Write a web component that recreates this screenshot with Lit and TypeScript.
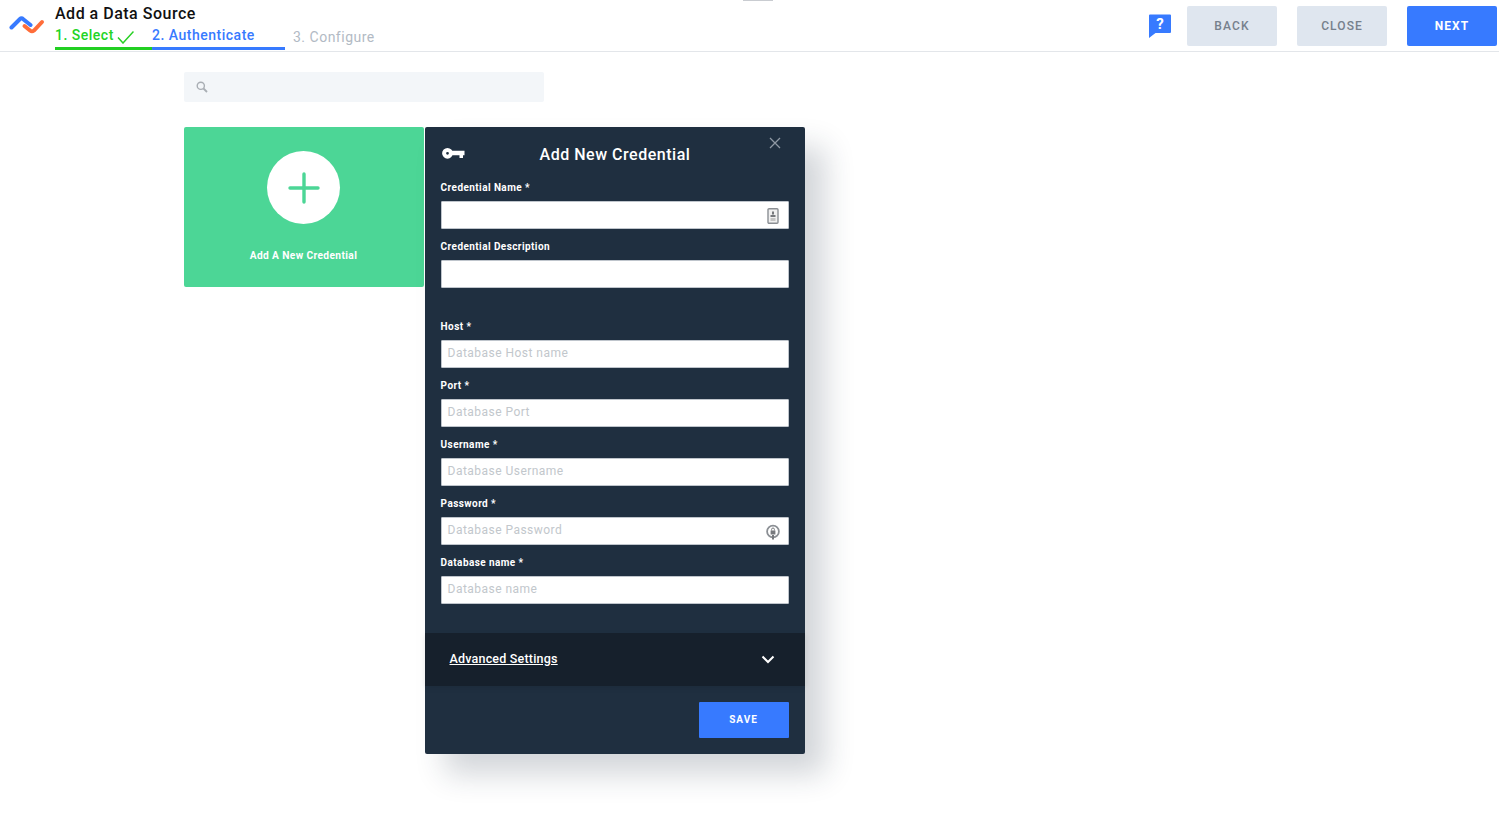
import { LitElement, html, css, svg } from "lit";
import { customElement } from "lit/decorators.js";

const fields = [
  { label: "Host *", ph: "Database Host name" },
  { label: "Port *", ph: "Database Port" },
  { label: "Username *", ph: "Database Username" },
  { label: "Password *", ph: "Database Password", icon: "lock" },
  { label: "Database name *", ph: "Database name" },
];

@customElement("app-root")
export class AppRoot extends LitElement {
  static styles = css`
    :host { display: block; height: 817px; position: relative; overflow: hidden; background: #fff; font-family: Roboto, "Liberation Sans", sans-serif; }
    * { box-sizing: border-box; }
    .handle { position: absolute; left: 743px; top: 0; width: 30px; height: 1px; background: #c9ccd1; }
    header { height: 52px; border-bottom: 1px solid #e3e6ea; display: flex; align-items: flex-start; }
    .logo { width: 36px; height: 20px; margin: 15px 10px 0 9px; flex: none; }
    .titles { width: 340px; flex: none; }
    .title { font-size: 16px; line-height: 19px; font-weight: 500; letter-spacing: 0.5px; color: #111; margin-top: 4px; }
    .steps { display: flex; font-size: 14px; font-weight: 500; letter-spacing: 0.5px; margin-top: 3px; height: 24px; }
    .step { display: flex; line-height: 18px; height: 24px; padding-top: 0; border-bottom: 3px solid transparent; }
    .s1 { width: 97px; color: #22d424; border-color: #22cf22; }
    .s1 svg { width: 17px; height: 14px; margin: 4px 0 0 3px; }
    .s2 { width: 133px; color: #377aff; border-color: #377aff; }
    .s3 { color: #b2bac4; margin-left: 8px; padding-top: 2px; font-weight: 400; }
    .actions { margin-left: auto; display: flex; align-items: flex-start; padding-top: 6px; padding-right: 2px; }
    .help { width: 24px; height: 25px; margin: 8px 15px 0 -1px; }
    .btn { width: 90px; height: 40px; border-radius: 2px; background: #dfe6ef; color: #76808c; font-size: 12px; font-weight: 500; letter-spacing: 1.1px; display: flex; align-items: center; justify-content: center; padding-bottom: 1px; margin-left: 20px; }
    .btn:first-of-type { margin-left: 0; }
    .btn.primary { background: #377aff; color: #fff; font-weight: 700; }
    main { padding: 20px 0 0 184px; }
    .search { width: 360px; height: 30px; background: #f3f6f9; border-radius: 2px; display: flex; align-items: center; padding-left: 12px; }
    .search svg { width: 12px; height: 12px; }
    .row { display: flex; align-items: flex-start; margin-top: 25px; }
    .card { width: 240px; height: 160px; background: #4cd696; border-radius: 2px; display: flex; flex-direction: column; align-items: center; padding: 24px 1px 0 0; }
    .circle { width: 73px; height: 73px; border-radius: 50%; background: #fff; display: flex; align-items: center; justify-content: center; }
    .circle svg { width: 32px; height: 32px; }
    .card-label { color: #fff; font-size: 10.2px; font-weight: 700; letter-spacing: 0.38px; margin-top: 25px; line-height: 13px; }
    .modal { width: 380px; height: 627px; margin-left: 1px; background: #1f2f40; border-radius: 2px; box-shadow: 20px 20px 30px rgba(32,47,65,0.2); display: flex; flex-direction: column; }
    .mhead { position: relative; height: 54px; display: flex; align-items: center; justify-content: center; padding-bottom: 0; }
    .key { position: absolute; left: 17px; top: 20px; width: 23px; height: 12px; }
    .x { position: absolute; right: 24px; top: 10px; width: 12px; height: 12px; }
    .mtitle { color: #fff; font-size: 16px; font-weight: 500; letter-spacing: 0.52px; }
    .form { padding: 0 16px; }
    label { display: block; color: #fff; font-size: 10px; font-weight: 700; letter-spacing: 0.42px; line-height: 14px; margin-bottom: 6px; margin-left: -0.4px; }
    .field { margin-bottom: 11px; }
    .gap { height: 21px; }
    .input { height: 28px; width: 348px; background: #fff; border: 1px solid #bfc5cc; border-radius: 1px; display: flex; align-items: center; justify-content: space-between; padding: 0 7px 0 5.6px; color: #c2c7cc; font-size: 12px; letter-spacing: 0.47px; }
    .input span { position: relative; top: -1px; }
    .input svg { width: 16px; height: 16px; flex: none; position: relative; top: 1px; }
    .adv { margin-top: 18px; height: 53px; background: #16202c; display: flex; align-items: center; justify-content: space-between; padding: 0 30px 0 25px; box-shadow: 0 2px 6px rgba(0,0,0,0.08); }
    .adv a { color: #fff; font-size: 12.5px; font-weight: 500; letter-spacing: 0.2px; text-decoration: underline; margin: 0 0 2px -0.5px; }
    .adv svg { width: 14px; height: 9px; }
    .foot { display: flex; justify-content: flex-end; padding: 16px 16px 0 0; }
    .save { width: 90px; height: 36px; background: #377aff; color: #fff; border-radius: 1px; font-size: 10px; font-weight: 700; letter-spacing: 1px; display: flex; align-items: center; justify-content: center; padding: 0 1px 1px 0; }
  `;

  private lockIcon() {
    return svg`<svg viewBox="0 0 16 16"><circle cx="8" cy="7.5" r="5.9" fill="none" stroke="#8b8f94" stroke-width="1.8"/><rect x="5.6" y="6.5" width="4.8" height="4" fill="#77797d"/><path d="M6.6 6.5V5.4a1.4 1.4 0 0 1 2.8 0v1.1" fill="none" stroke="#77797d"/><path d="M7 11h2v4.5H7z" fill="#77797d"/></svg>`;
  }

  private badgeIcon() {
    return svg`<svg viewBox="0 0 16 16"><rect x="3" y="0.7" width="10" height="14.6" rx="1" fill="#f0f0f0" stroke="#8b8f94" stroke-width="1.4"/><rect x="7" y="3.5" width="2" height="3" fill="#77797d"/><rect x="5.5" y="7" width="5" height="2" fill="#77797d"/><rect x="5.5" y="10" width="5" height="3" fill="#c4c4c4"/></svg>`;
  }

  render() {
    return html`
      <div class="handle"></div>
      <header>
        <svg class="logo" viewBox="0 0 36 20">
          <path d="M2.5 12.5 L11 4 Q12.5 2.5 14 4 L21.5 10" fill="none" stroke="#377aff" stroke-width="4" stroke-linecap="round"/>
          <path d="M15.5 11 L21 15.5 Q23 17 25 15.5 L33 7" fill="none" stroke="#ff6d3a" stroke-width="4" stroke-linecap="round"/>
        </svg>
        <div class="titles">
          <div class="title">Add a Data Source</div>
          <div class="steps">
            <div class="step s1">1. Select<svg viewBox="0 0 17 14"><path d="M1 7.5 L6 13 L16.5 1.5" fill="none" stroke="#28d024" stroke-width="1.5"/></svg></div>
            <div class="step s2">2. Authenticate</div>
            <div class="step s3">3. Configure</div>
          </div>
        </div>
        <div class="actions">
          <svg class="help" viewBox="0 0 24 25">
            <path d="M1 1.5 Q1 0.5 2 0.5 H22 Q23 0.5 23 1.5 V18 Q23 19 22 19 H7.5 L1 24 V1.5 Z" fill="#377aff"/>
            <text x="12" y="15" text-anchor="middle" fill="#fff" font-size="15" font-weight="700" font-family="Roboto">?</text>
          </svg>
          <div class="btn">BACK</div>
          <div class="btn">CLOSE</div>
          <div class="btn primary">NEXT</div>
        </div>
      </header>
      <main>
        <div class="search">
          <svg viewBox="0 0 12 12"><circle cx="4.8" cy="4.8" r="3.6" fill="none" stroke="#a9aeb4" stroke-width="1.4"/><path d="M7.5 7.5 L11 11" stroke="#a9aeb4" stroke-width="1.8"/></svg>
        </div>
        <div class="row">
          <div class="card">
            <div class="circle">
              <svg viewBox="0 0 32 32"><path d="M16 2V30M2 16H30" stroke="#4cd696" stroke-width="3.4" stroke-linecap="round"/></svg>
            </div>
            <div class="card-label">Add A New Credential</div>
          </div>
          <div class="modal">
            <div class="mhead">
              <svg class="key" viewBox="0 0 23 12"><circle cx="5.5" cy="6.3" r="3.4" fill="none" stroke="#fff" stroke-width="4"/><path d="M9 3.8H22.5V8.3H21V11H17.5V8.3H9Z" fill="#fff"/></svg>
              <div class="mtitle">Add New Credential</div>
              <svg class="x" viewBox="0 0 12 12"><path d="M1 1L11 11M11 1L1 11" stroke="#8f98a3" stroke-width="1.3"/></svg>
            </div>
            <div class="form">
              <div class="field"><label>Credential Name *</label><div class="input"><span></span>${this.badgeIcon()}</div></div>
              <div class="field"><label>Credential Description</label><div class="input"></div></div>
              <div class="gap"></div>
              ${fields.map(f => html`
                <div class="field"><label>${f.label}</label><div class="input"><span>${f.ph}</span>${f.icon ? this.lockIcon() : ""}</div></div>
              `)}
            </div>
            <div class="adv">
              <a>Advanced Settings</a>
              <svg viewBox="0 0 14 9"><path d="M1.5 1.5 L7 7 L12.5 1.5" fill="none" stroke="#fff" stroke-width="2"/></svg>
            </div>
            <div class="foot"><div class="save">SAVE</div></div>
          </div>
        </div>
      </main>
    `;
  }
}
